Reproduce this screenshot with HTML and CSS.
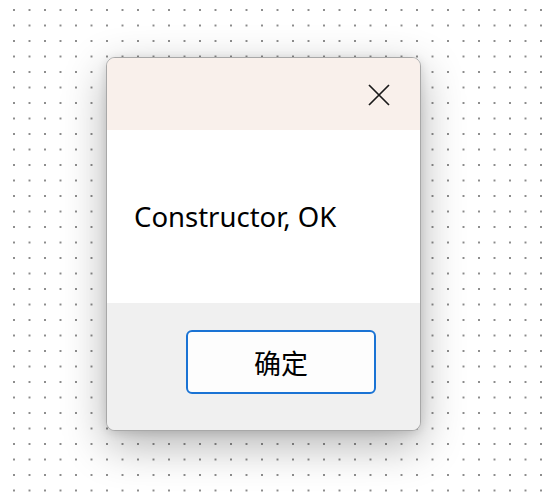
FILE: index.html
```html
<!DOCTYPE html>
<html>
<head>
<meta charset="utf-8">
<link rel="stylesheet" href="styles.css">
</head>
<body>
<div class="stage">
  <div class="dialog">
    <div class="titlebar">
      <button class="close" aria-label="Close">
        <svg width="24" height="24" viewBox="0 0 24 24"><path d="M2 2 L22 22 M22 2 L2 22" stroke="#1a1a1a" stroke-width="1.7" fill="none"/></svg>
      </button>
    </div>
    <div class="content">
      <p class="message">Constructor, OK</p>
    </div>
    <div class="footer">
      <button class="ok">确定</button>
    </div>
  </div>
</div>
</body>
</html>
```
FILE: styles.css
```css
html, body {
  margin: 0;
  padding: 0;
  width: 550px;
  height: 500px;
  overflow: hidden;
}
body {
  background-color: #ffffff;
  background-image: radial-gradient(circle, #8a8a8a 0.9px, transparent 1.3px);
  background-size: 15.5px 15.5px;
  background-position: 6.25px 2.25px;
  font-family: "Noto Sans", "Noto Sans CJK SC", sans-serif;
}
.stage {
  padding: 57px 0 0 106px;
}
.dialog {
  width: 313px;
  height: 372px;
  border: 1px solid #a8a8a8;
  border-radius: 9px;
  overflow: hidden;
  display: flex;
  flex-direction: column;
  box-shadow: 0 14px 44px rgba(0,0,0,0.30), 0 2px 10px rgba(0,0,0,0.12);
  background: #f0f0f0;
}
.titlebar {
  height: 72px;
  background: #f9f0eb;
  display: flex;
  justify-content: flex-end;
  align-items: flex-start;
}
.close {
  border: none;
  background: transparent;
  padding: 0;
  margin: 25px 29px 0 0;
  width: 24px;
  height: 24px;
  display: flex;
}
.content {
  height: 173px;
  background: #ffffff;
  display: flex;
  align-items: center;
}
.message {
  margin: 0 0 0 27px;
  font-size: 27.5px;
  color: #000;
  position: relative;
  top: 0;
}
.footer {
  flex: 1;
  background: #f0f0f0;
  display: flex;
  justify-content: flex-end;
  align-items: flex-start;
}
.ok {
  margin: 27px 44px 0 0;
  width: 190px;
  height: 64px;
  border: 2px solid #1a73d4;
  border-radius: 6px;
  background: #fdfdfd;
  font-family: "Noto Sans CJK SC", sans-serif;
  font-size: 27px;
  color: #000;
  padding: 0;
}
```
